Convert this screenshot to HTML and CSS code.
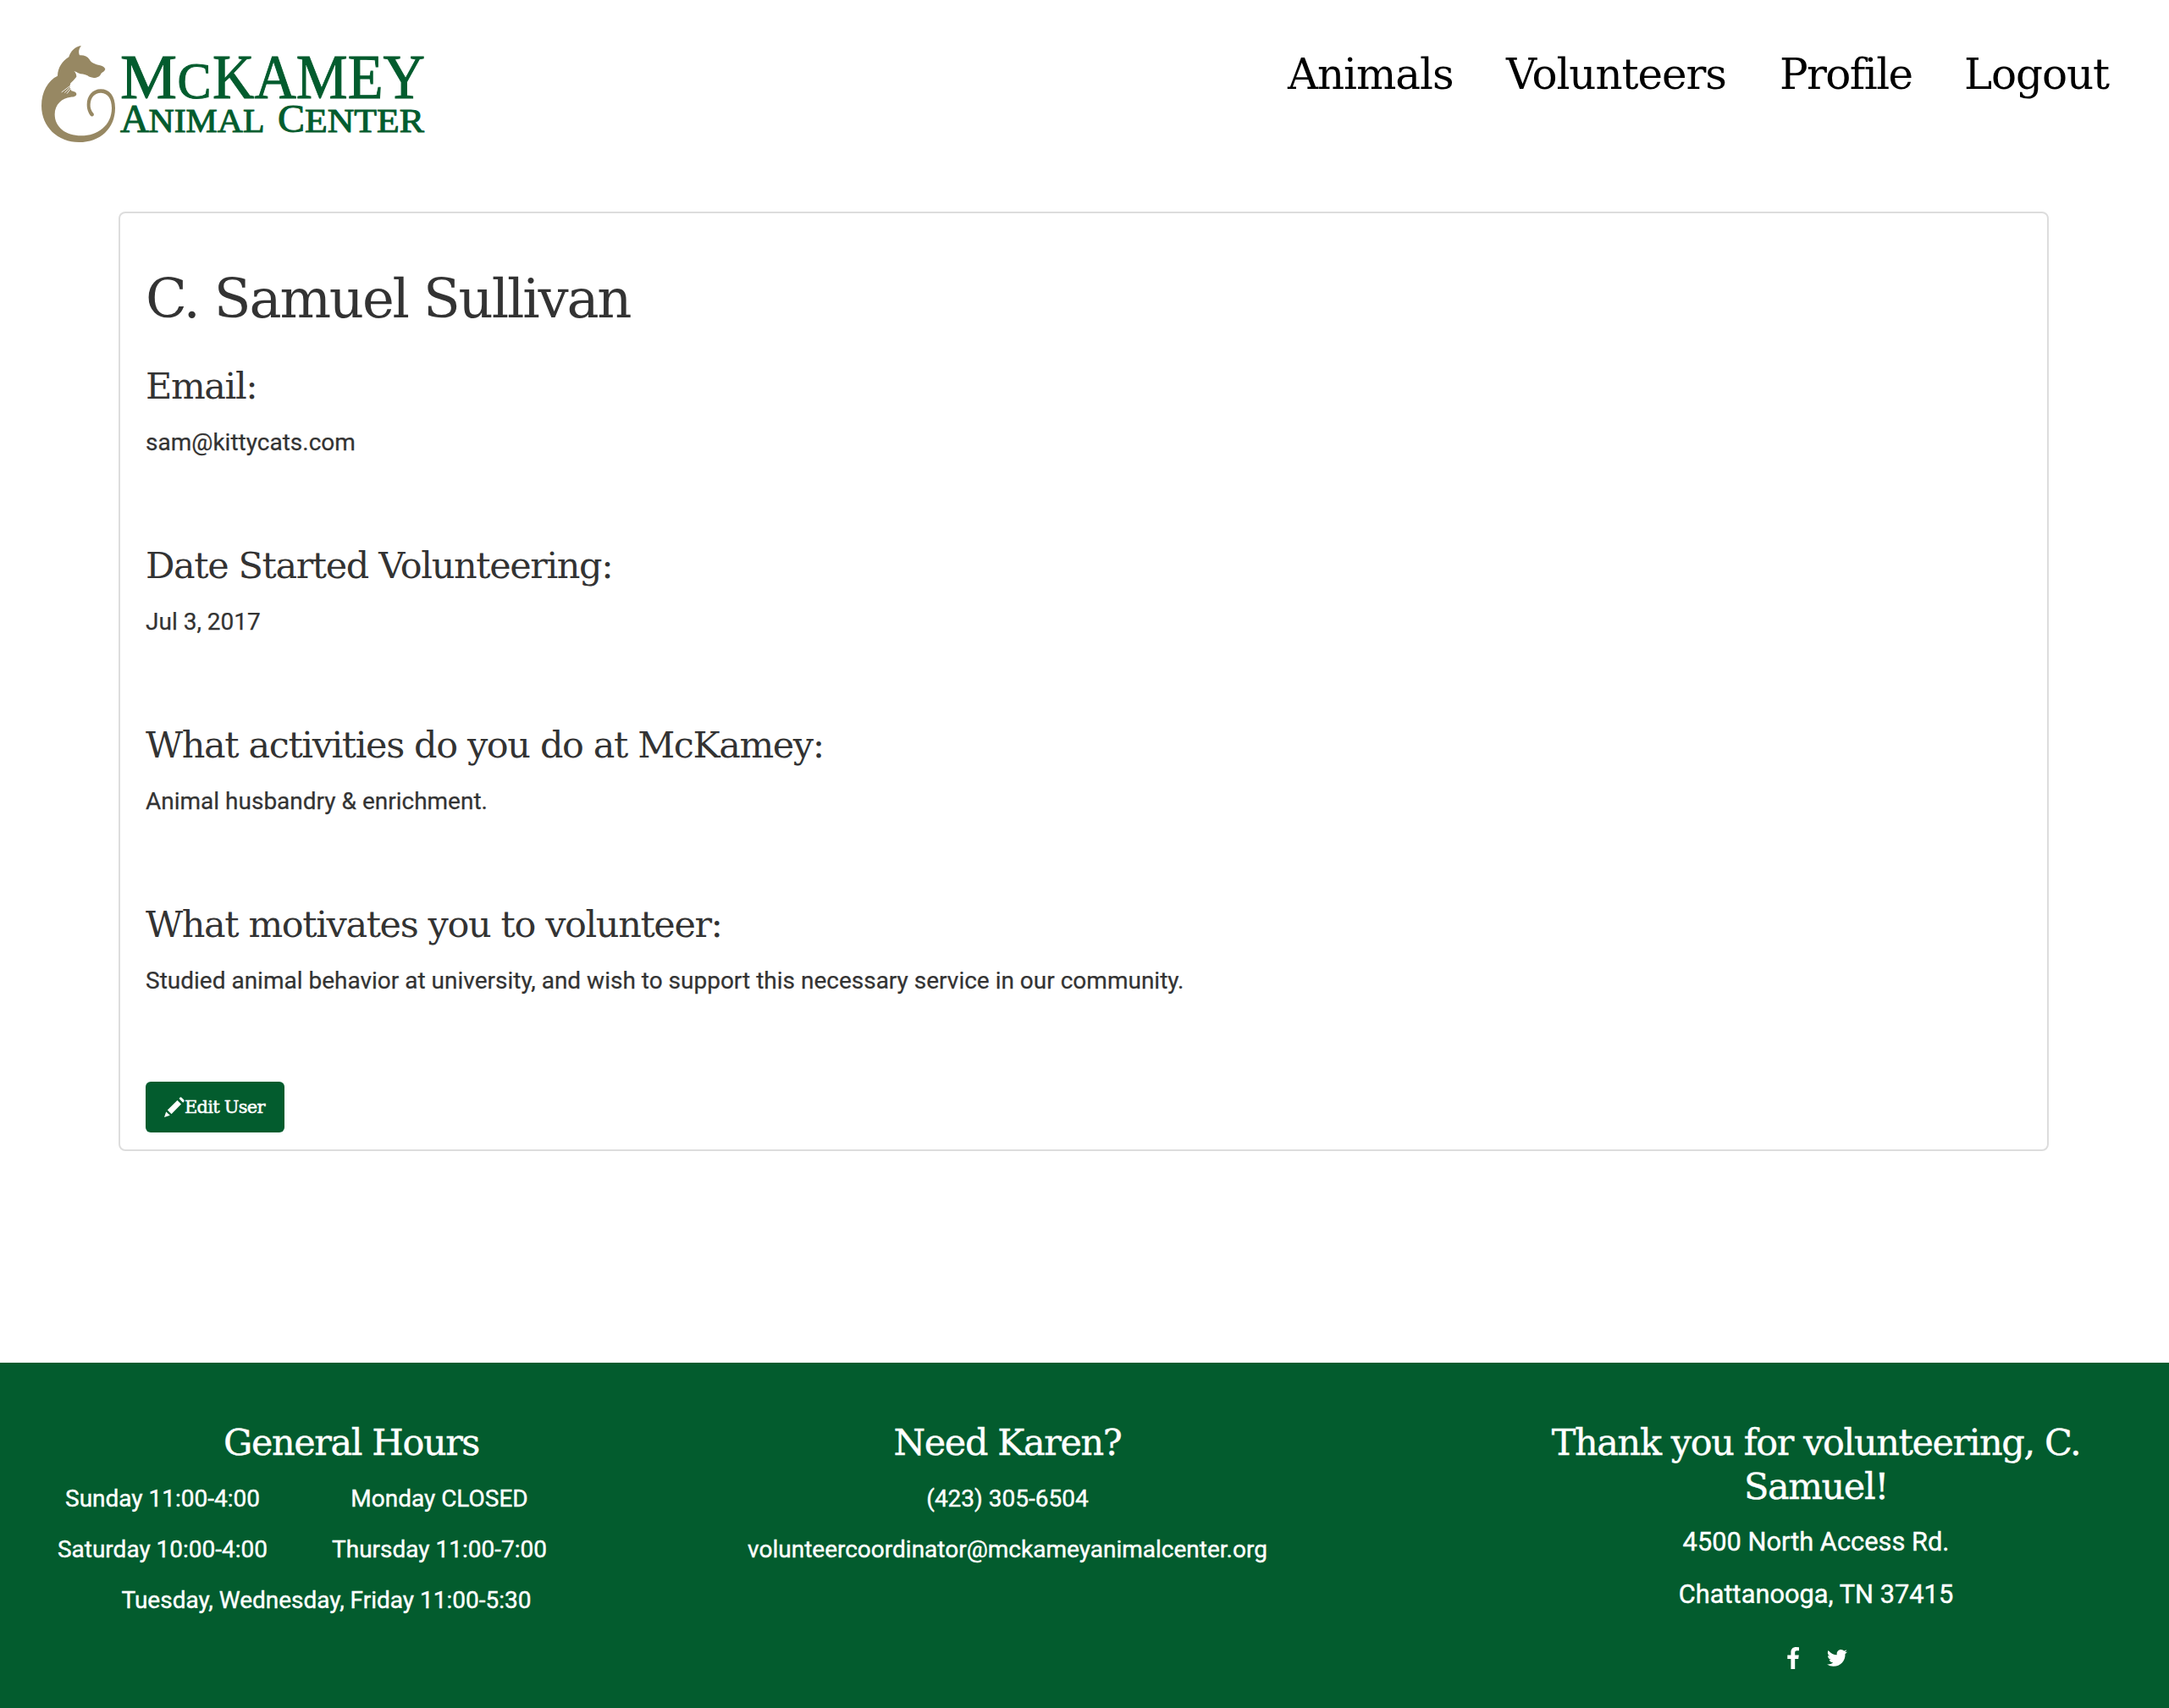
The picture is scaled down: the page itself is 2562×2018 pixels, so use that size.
FILE: index.html
```html
<!DOCTYPE html>
<html lang="en">
<head>
<meta charset="utf-8">
<title>McKamey Animal Center</title>
<link rel="stylesheet" href="styles.css">
</head>
<body>
<header class="navbar">
  <a class="brand" aria-label="McKamey Animal Center">
    <svg class="logo" viewBox="0 0 490 140">
      <g transform="translate(10 5) scale(.33333)">
        <path class="logo-pet" d="M168 27C146 30 130 46 124 67C100 82 85 105 84 134C50 150 27 190 27 240C27 315 85 369 160 369C235 369 288 320 288 248C288 205 268 181 237 181C208 181 188 205 188 236C188 255 196 270 203 277C209 280 215 274 212 268C203 258 199 248 200 235C201 210 215 194 238 194C262 195 276 215 276 248C276 310 225 346 168 346C112 346 74 315 74 270C74 235 100 212 130 209C142 209 151 206 151 198C150 191 142 190 133 187C128 180 126 170 130 160Q140 151 151 137C151 130 148 121 142 117Q151 119 157 124C168 129 180 127 190 133C197 140 215 144 228 137C238 133 235 126 242 122Q251 118 253 110Q250 101 235 97C217 93 204 89 197 76C190 65 178 60 162 61C157 48 160 37 168 27Z"/>
        <path class="logo-whisker" d="M129 169L98 192M129 174L109 194M130 180L117 197"/>
      </g>
      <g class="logo-text">
        <text x="112" y="76" font-size="75" textLength="67" lengthAdjust="spacingAndGlyphs">M</text>
        <text x="179.500" y="76" font-size="61" textLength="40" lengthAdjust="spacingAndGlyphs">C</text>
        <text x="221" y="76" font-size="75" textLength="251" lengthAdjust="spacingAndGlyphs">KAMEY</text>
        <text x="112" y="115.500" font-size="46" textLength="34" lengthAdjust="spacingAndGlyphs">A</text>
        <text x="145.500" y="115.500" font-size="40" textLength="137" lengthAdjust="spacingAndGlyphs">NIMAL</text>
        <text x="298" y="115.500" font-size="46" textLength="32" lengthAdjust="spacingAndGlyphs">C</text>
        <text x="330" y="115.500" font-size="40" textLength="141" lengthAdjust="spacingAndGlyphs">ENTER</text>
      </g>
    </svg>
  </a>
  <nav class="menu">
    <a>Animals</a>
    <a>Volunteers</a>
    <a class="menu-profile">Profile</a>
    <a>Logout</a>
  </nav>
</header>

<main class="card">
  <h1>C. Samuel Sullivan</h1>
  <section class="field">
    <h2>Email:</h2>
    <p>sam@kittycats.com</p>
  </section>
  <section class="field">
    <h2>Date Started Volunteering:</h2>
    <p>Jul 3, 2017</p>
  </section>
  <section class="field">
    <h2>What activities do you do at McKamey:</h2>
    <p>Animal husbandry &amp; enrichment.</p>
  </section>
  <section class="field">
    <h2>What motivates you to volunteer:</h2>
    <p>Studied animal behavior at university, and wish to support this necessary service in our community.</p>
  </section>
  <a class="button">
    <svg class="pencil" viewBox="0 0 24 24"><path d="M0 24L2.200 17.500L6.800 21.800ZM3.800 15.500L15.500 4L20 8.500L8.500 20.200ZM17.500 2Q19-.5 20.500 .800L23.300 3.500Q24.500 5 22.200 6.700Z"/></svg><span>Edit User</span>
  </a>
</main>

<footer class="footer">
  <section class="hours">
    <h2>General Hours</h2>
    <div class="hours-grid">
      <p>Sunday 11:00-4:00</p>
      <p>Monday CLOSED</p>
      <p>Saturday 10:00-4:00</p>
      <p>Thursday 11:00-7:00</p>
    </div>
    <p class="weekdays">Tuesday, Wednesday, Friday 11:00-5:30</p>
  </section>
  <section class="contact">
    <h2>Need Karen?</h2>
    <p>(423) 305-6504</p>
    <p>volunteercoordinator@mckameyanimalcenter.org</p>
  </section>
  <section class="thanks">
    <h2>Thank you for volunteering, C. Samuel!</h2>
    <p>4500 North Access Rd.</p>
    <p>Chattanooga, TN 37415</p>
    <div class="social">
      <svg class="facebook" viewBox="0 0 14 26"><path d="M14 .2V4.300H11.500C9.600 4.300 9.200 5.200 9.200 6.600V9.500H13.800L13.200 14H9.200V26H4.400V14H.3V9.500H4.400V6.100C4.400 2.100 6.900 0 10.500 0Z"/></svg>
      <svg class="twitter" viewBox="0 0 24 20"><path d="M24 2.400Q23 3.900 21.500 4.900C22 13 16 19.800 7.600 19.800Q3.500 19.800 0 17.500Q4.200 17.900 7.300 15.400Q3.800 15.200 2.700 12Q3.900 12.200 4.900 11.900Q1 10.900 1 7Q2 7.600 3.200 7.700C.7 6 .2 3.300 1.600 1C4.400 4.400 8 6.200 11.800 6.300C10.900 2.500 13.700 0 16.600 0Q19 0 20.200 1.500Q21.900 1.200 23.300.3Q22.800 2 21.200 3Q22.700 2.900 24 2.400Z"/></svg>
    </div>
  </section>
</footer>
</body>
</html>
```
FILE: styles.css
```css
* { box-sizing: border-box; }

body {
  margin: 0;
  background: #fff;
  color: #333;
  font: 28px/40px Roboto, sans-serif;
}

h1, h2, p { margin: 0; font-weight: 400; }

h1, h2, .menu, .button { font-family: "DejaVu Serif", serif; }

.navbar {
  display: flex;
  justify-content: space-between;
  align-items: flex-start;
  height: 250px;
  padding: 40px 42px 0 30px;
}

.logo { display: block; width: 490px; height: 140px; overflow: visible; }
.logo-pet { fill: #978863; }
.logo-whisker { fill: none; stroke: #fff; stroke-width: 2.5; }
.logo-text {
  fill: #035c2e;
  font-family: "Liberation Serif", serif;
  stroke: #035c2e;
  stroke-width: 1;
}

.menu {
  display: grid;
  grid-template-columns: 258px 323px 218px 200px;
  padding-top: 18px;
  color: #000;
  font-size: 50px;
  line-height: 60px;
  letter-spacing: -1.1px;
}

.menu-profile { letter-spacing: -1.6px; }

.card {
  width: 2280px;
  height: 1110px;
  margin: 0 auto 250px 140px;
  padding: 61px 30px 0;
  border: 2px solid #ddd;
  border-radius: 8px;
}

h1 { font-size: 64px; line-height: 80px; letter-spacing: -2.2px; }
h2 { font-size: 43px; line-height: 52px; letter-spacing: -1.4px; }

.card h1 { margin-bottom: 37px; }
.field { height: 212px; }
.card h2 { margin: 0 0 21px; }

.card p { -webkit-text-stroke: .25px #333; }

.button {
  display: flex;
  align-items: center;
  width: 164px;
  height: 60px;
  padding-left: 22px;
  border-radius: 6px;
  background: #035c2e;
  color: #fff;
  font-size: 21px;
  letter-spacing: -.75px;
  white-space: nowrap;
  -webkit-text-stroke: .5px #fff;
}

.pencil { width: 24px; height: 24px; fill: #fff; }

.footer {
  display: flex;
  height: 408px;
  padding-top: 68px;
  background: #035c2e;
  color: #fff;
  text-align: center;
  -webkit-text-stroke: .4px #fff;
}

.footer h2 { margin-bottom: 21px; }
.hours { width: 830px; }
.hours p, .contact p { margin-bottom: 20px; }
.hours-grid { display: grid; grid-template-columns: 328px 326px; padding-left: 28px; }
.weekdays { width: 771px; }
.contact { width: 720px; }
.thanks { width: 690px; margin: 0 72px 0 auto; }
.footer .thanks h2 { margin-bottom: 19px; }
.thanks p { font-size: 30.8px; line-height: 42px; margin-bottom: 20px; }
.social {
  display: flex;
  justify-content: center;
  align-items: center;
  gap: 33px;
  padding: 21px 0 0 3px;
}
.facebook { width: 14px; height: 26px; fill: #fff; }
.twitter { width: 24px; height: 20px; fill: #fff; }
```
